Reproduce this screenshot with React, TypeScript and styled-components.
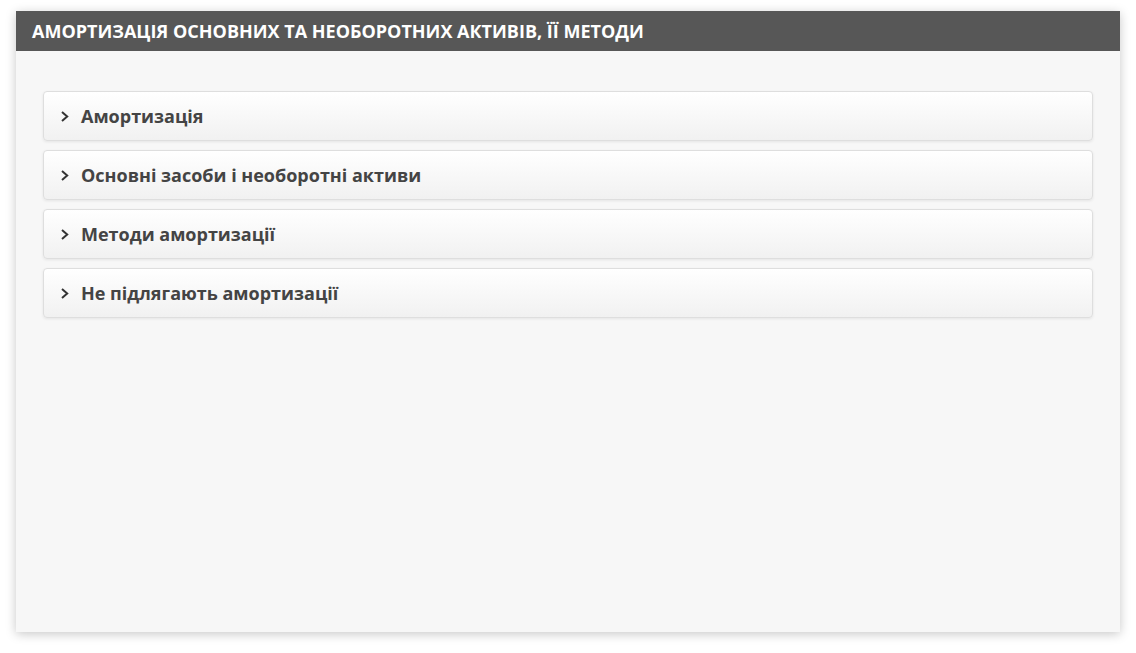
import React from "react";
import styled, { createGlobalStyle } from "styled-components";

const Global = createGlobalStyle`
  html, body { margin: 0; padding: 0; background: #ffffff; }
  body { font-family: "Open Sans", "Noto Sans", sans-serif; }
  * { box-sizing: border-box; }
`;

const Page = styled.div`
  width: 1136px;
  height: 653px;
  padding: 11px 16px 21px 16px;
`;

const Panel = styled.section`
  height: 100%;
  background: #f7f7f7;
  box-shadow: 0 2px 10px rgba(0, 0, 0, 0.22);
  display: flex;
  flex-direction: column;
`;

const Header = styled.header`
  height: 40px;
  background: #575757;
  color: #ffffff;
  display: flex;
  align-items: center;
  padding-left: 16px;
  font-weight: 700;
  font-size: 18px;
  letter-spacing: 0;
  text-transform: uppercase;
`;

const Content = styled.div`
  padding: 40px 27px;
  display: flex;
  flex-direction: column;
  gap: 9px;
`;

const Item = styled.button`
  height: 50px;
  width: 100%;
  border: 1px solid #dedede;
  border-radius: 4px;
  background: linear-gradient(#ffffff, #f1f1f1);
  box-shadow: 0 1px 3px rgba(0, 0, 0, 0.08);
  display: flex;
  align-items: center;
  gap: 11px;
  padding: 0 0 0 16px;
  font-family: "Open Sans", "Noto Sans", sans-serif;
  font-weight: 700;
  font-size: 18px;
  color: #444444;
  text-align: left;
  cursor: pointer;
`;

const Chevron = styled.svg`
  width: 10px;
  height: 12px;
  flex: none;
`;

const items = [
  "Амортизація",
  "Основні засоби і необоротні активи",
  "Методи амортизації",
  "Не підлягають амортизації",
];

export default function App() {
  return (
    <>
      <Global />
      <Page>
        <Panel>
          <Header>Амортизація основних та необоротних активів, її методи</Header>
          <Content>
            {items.map((t) => (
              <Item key={t}>
                <Chevron viewBox="0 0 10 12">
                  <path d="M2 2 L7.2 6.5 L2 11" fill="none" stroke="#333" strokeWidth="2" />
                </Chevron>
                {t}
              </Item>
            ))}
          </Content>
        </Panel>
      </Page>
    </>
  );
}
